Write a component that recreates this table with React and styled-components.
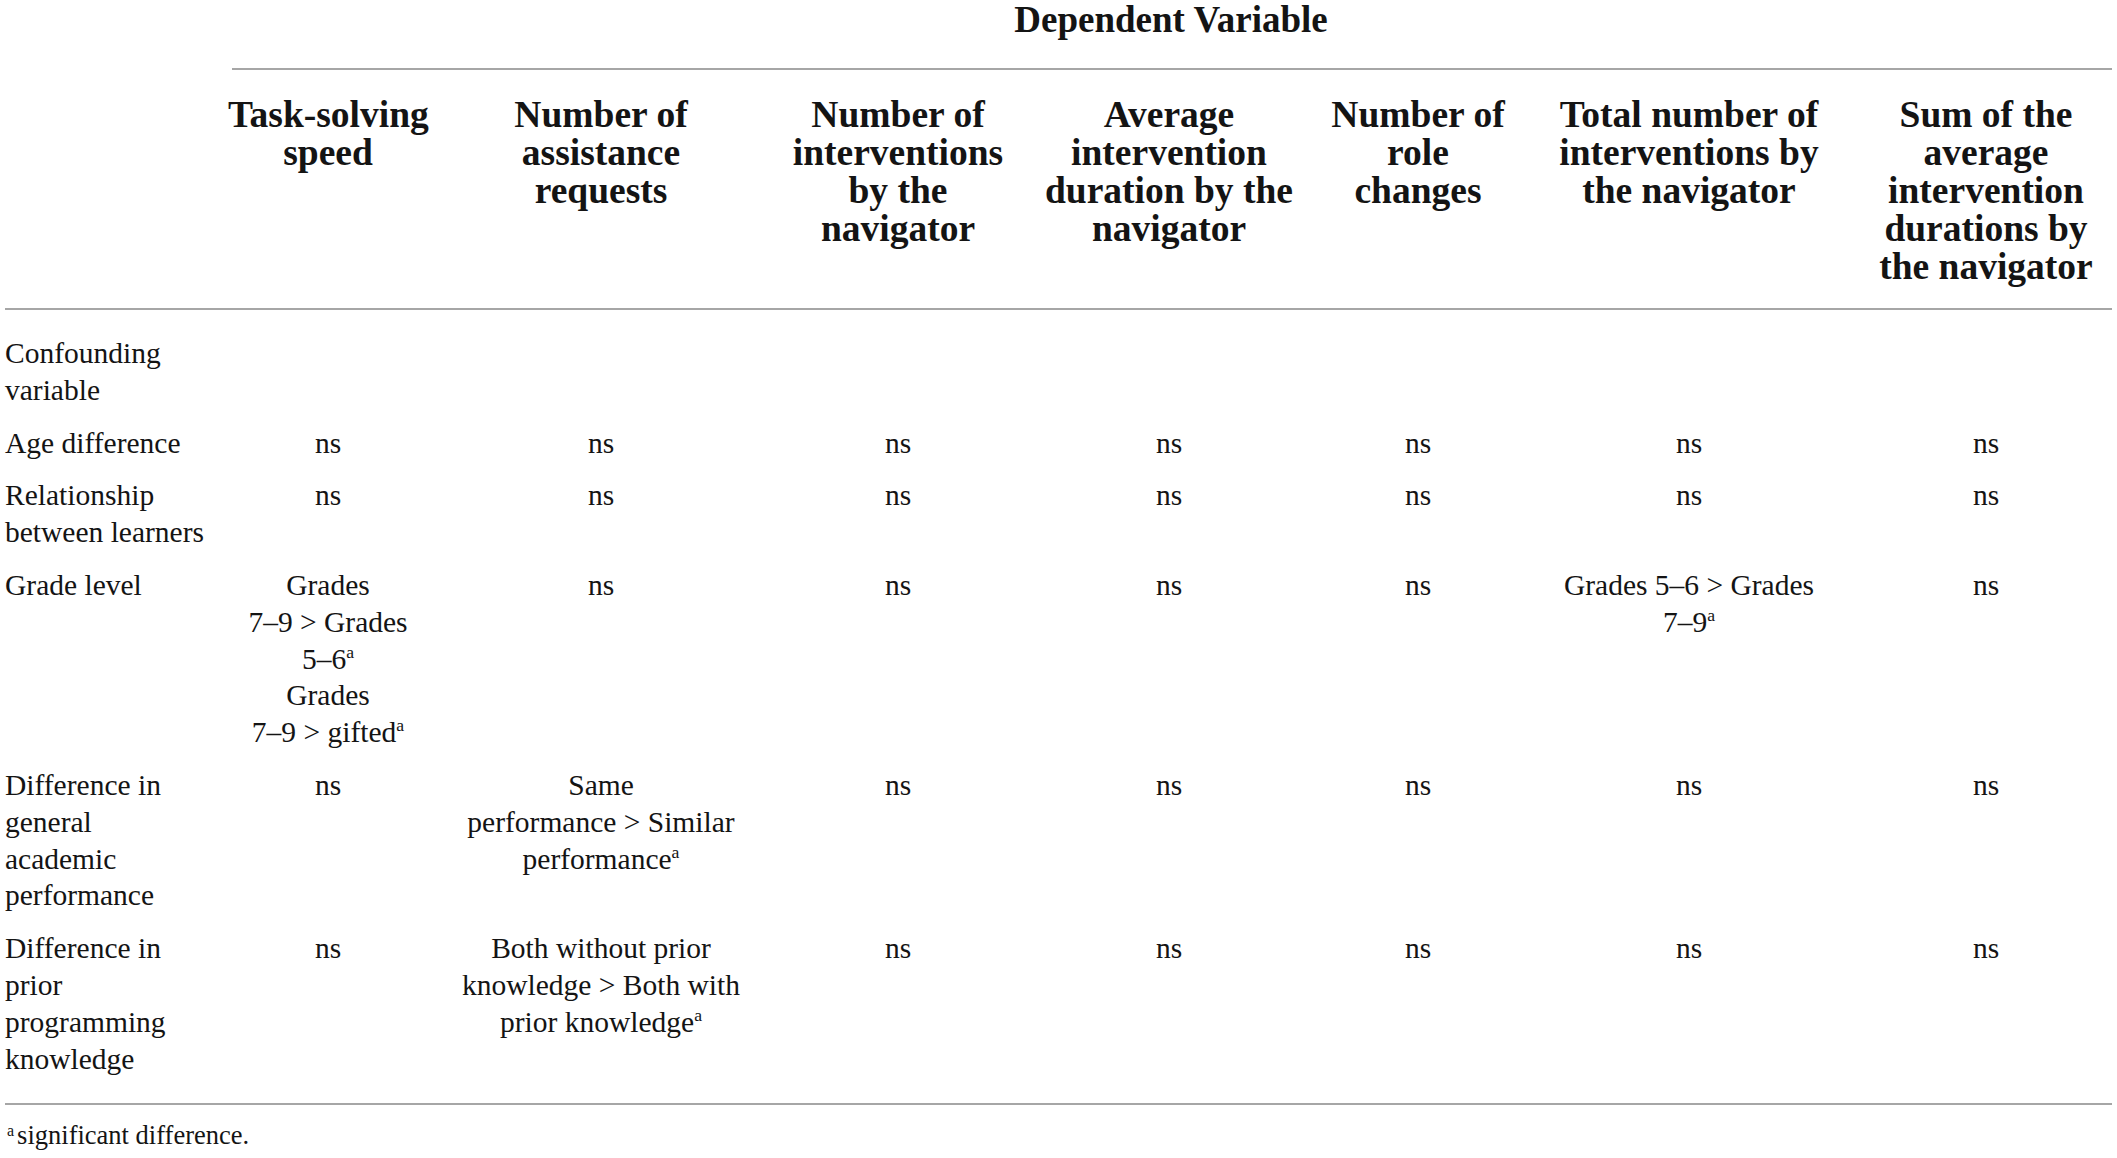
import React from 'react';
import styled, {createGlobalStyle} from 'styled-components';

const COLUMNS = '228px 200px 346px 248px 294px 204px 338px 256px';

const GlobalStyle = createGlobalStyle`
  html, body {
    margin: 0;
    padding: 0;
    background: #ffffff;
  }
  body {
    font-family: "Liberation Serif", "Times New Roman", serif;
    color: #141414;
  }
`;

const Page = styled.div`
  width: 2117px;
`;

const Grid = styled.div`
  display: grid;
  grid-template-columns: ${COLUMNS};
`;

const Spanner = styled.div`
  grid-column: 2 / -1;
  padding-top: 1px;
`;

const Title = styled.div`
  font-size: 37px;
  font-weight: 700;
  line-height: 38px;
  text-align: center;
  white-space: nowrap;
`;

const Rule = styled.div`
  height: 2px;
  background: #a6a6a6;
  margin: ${props => props.$margin || '0 5px 0 5px'};
`;

const HeadRow = styled(Grid)`
  padding: 26px 0 22px 0;
`;

const ColHead = styled.div`
  font-size: 37.5px;
  font-weight: 700;
  line-height: 38px;
  text-align: center;
  white-space: nowrap;
`;

const Body = styled.div`
  padding: 17px 0 18px 0;
`;

const Row = styled(Grid)`
  font-size: 29.5px;
  line-height: 36.8px;
`;

const Stub = styled.div`
  padding: 8px 0 8px 5px;
  white-space: nowrap;
`;

const Cell = styled.div`
  padding: 8px 0;
  text-align: center;
  white-space: nowrap;
`;

const Sup = styled.sup`
  font-size: 0.6em;
  line-height: 0;
  vertical-align: 0.6em;
`;

const Footnote = styled.div`
  margin-top: 15px;
  padding-left: 7px;
  font-size: 26.5px;
  line-height: 30px;
  white-space: nowrap;
`;

const FootMark = styled.sup`
  font-size: 16px;
  line-height: 0;
  vertical-align: 0.55em;
  margin-right: 3px;
`;

const headers = [
  ['Task-solving', 'speed'],
  ['Number of', 'assistance', 'requests'],
  ['Number of', 'interventions', 'by the', 'navigator'],
  ['Average', 'intervention', 'duration by the', 'navigator'],
  ['Number of', 'role', 'changes'],
  ['Total number of', 'interventions by', 'the navigator'],
  ['Sum of the', 'average', 'intervention', 'durations by', 'the navigator']
];

const a = <Sup>a</Sup>;
const ns = 'ns';

const rows = [
  {label: ['Confounding', 'variable'], cells: []},
  {label: ['Age difference'], cells: [ns, ns, ns, ns, ns, ns, ns]},
  {
    label: ['Relationship', 'between learners'],
    cells: [ns, ns, ns, ns, ns, ns, ns]
  },
  {
    label: ['Grade level'],
    cells: [
      [
        'Grades',
        '7–9 > Grades',
        <>5–6{a}</>,
        'Grades',
        <>7–9 > gifted{a}</>
      ],
      ns,
      ns,
      ns,
      ns,
      ['Grades 5–6 > Grades', <>7–9{a}</>],
      ns
    ]
  },
  {
    label: ['Difference in', 'general', 'academic', 'performance'],
    cells: [
      ns,
      ['Same', 'performance > Similar', <>performance{a}</>],
      ns,
      ns,
      ns,
      ns,
      ns
    ]
  },
  {
    label: ['Difference in', 'prior', 'programming', 'knowledge'],
    cells: [
      ns,
      ['Both without prior', 'knowledge > Both with', <>prior knowledge{a}</>],
      ns,
      ns,
      ns,
      ns,
      ns
    ]
  }
];

const Lines = ({lines}) =>
  lines.map((line, i) => (
    <React.Fragment key={i}>
      {i > 0 && <br />}
      {line}
    </React.Fragment>
  ));

export default function App() {
  return (
    <Page>
      <GlobalStyle />
      <Grid>
        <Spanner>
          <Title>Dependent Variable</Title>
          <Rule $margin="29px 2px 0 4px" />
        </Spanner>
      </Grid>
      <HeadRow>
        <div />
        {headers.map((lines, i) => (
          <ColHead key={i}>
            <Lines lines={lines} />
          </ColHead>
        ))}
      </HeadRow>
      <Rule $margin="0 5px 0 5px" />
      <Body>
        {rows.map((row, i) => (
          <Row key={i}>
            <Stub>
              <Lines lines={row.label} />
            </Stub>
            {row.cells.map((cell, j) => (
              <Cell key={j}>
                {Array.isArray(cell) ? <Lines lines={cell} /> : cell}
              </Cell>
            ))}
          </Row>
        ))}
      </Body>
      <Rule $margin="0 5px 0 5px" />
      <Footnote>
        <FootMark>a</FootMark>significant difference.
      </Footnote>
    </Page>
  );
}
